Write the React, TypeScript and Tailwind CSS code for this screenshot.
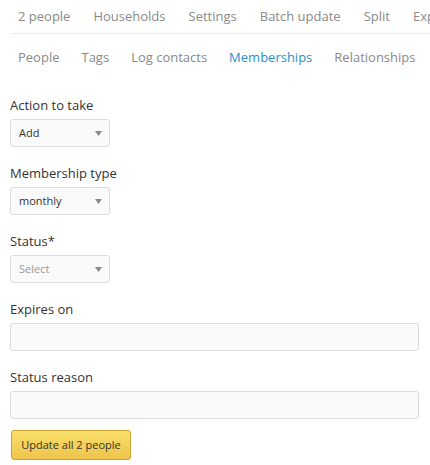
import React from "react";

const font = { fontFamily: '"Open Sans", "Noto Sans", sans-serif' };

function Select({ value, muted }: { value: string; muted?: boolean }) {
  return (
    <div className="flex h-[28px] w-[100px] items-center justify-between rounded-[3px] border border-[#dcdcdc] bg-[#fafafa] pl-[8px] pr-[6px]">
      <span className={`text-[11px] ${muted ? "text-[#999]" : "text-[#333]"}`}>{value}</span>
      <svg width="7" height="5" viewBox="0 0 7 5" className="mr-[1px]">
        <path d="M0 0 H7 L3.5 5 Z" fill="#8a8a8a" />
      </svg>
    </div>
  );
}

function Label({ children }: { children: React.ReactNode }) {
  return <div className="text-[13px] leading-[18px] text-[#333]">{children}</div>;
}

export default function App() {
  const top = ["2 people", "Households", "Settings", "Batch update", "Split", "Export"];
  const sub = ["People", "Tags", "Log contacts", "Memberships", "Relationships"];
  return (
    <div className="h-[465px] w-[430px] overflow-hidden bg-white" style={font}>
      <div className="ml-[10px] border-b border-[#ececec]">
        <div className="flex h-[33px] items-center gap-[23px] whitespace-nowrap pl-[8px] text-[13px] text-[#8a8a8a]">
          {top.map((t) => (
            <span key={t}>{t}</span>
          ))}
        </div>
      </div>
      <div className="flex h-[47px] items-center gap-[22px] whitespace-nowrap pl-[18px] text-[13px] text-[#8a8a8a]">
        {sub.map((t) => (
          <span key={t} className={t === "Memberships" ? "text-[#2a8fc4]" : ""}>
            {t}
          </span>
        ))}
      </div>
      <div className="flex flex-col px-[10px] pt-[15px]">
        <Label>Action to take</Label>
        <div className="mt-[5px]">
          <Select value="Add" />
        </div>
        <div className="mt-[17px]">
          <Label>Membership type</Label>
        </div>
        <div className="mt-[5px]">
          <Select value="monthly" />
        </div>
        <div className="mt-[17px]">
          <Label>Status*</Label>
        </div>
        <div className="mt-[5px]">
          <Select value="Select" muted />
        </div>
        <div className="mt-[17px]">
          <Label>Expires on</Label>
        </div>
        <div className="mt-[5px] h-[28px] w-[409px] rounded-[3px] border border-[#dcdcdc] bg-[#fafafa]" />
        <div className="mt-[17px]">
          <Label>Status reason</Label>
        </div>
        <div className="mt-[5px] h-[28px] w-[409px] rounded-[3px] border border-[#dcdcdc] bg-[#fafafa]" />
        <button className="ml-[1px] mt-[11px] flex h-[30px] w-[120px] items-center justify-center rounded-[3px] border border-[#c7a332] bg-gradient-to-b from-[#f9e06a] to-[#eec44c] text-[11px] text-[#333]">
          Update all 2 people
        </button>
      </div>
    </div>
  );
}
